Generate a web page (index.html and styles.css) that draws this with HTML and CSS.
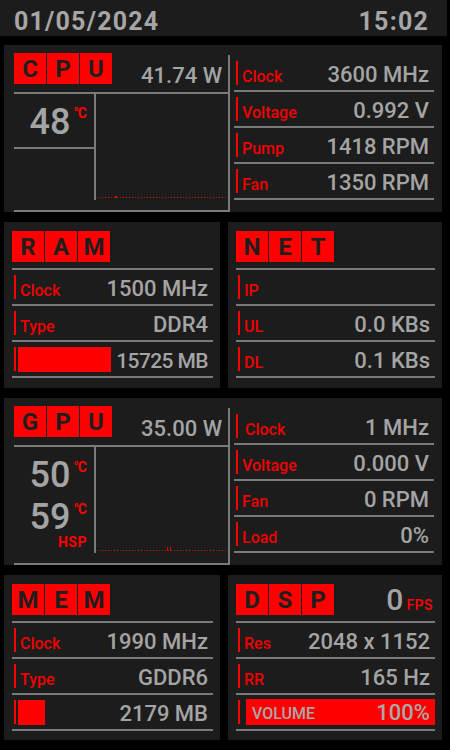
FILE: index.html
```html
<!DOCTYPE html>
<html>
<head>
<meta charset="utf-8">
<link rel="stylesheet" href="styles.css">
</head>
<body>
<div class="header"><span>01/05/2024</span><span>15:02</span></div>
<div class="grid">
  <section class="panel wide">
    <div class="bl">
      <div class="head">
        <div class="title"><span>C</span><span>P</span><span>U</span></div>
        <div class="power">41.74 W</div>
      </div>
      <div class="body">
        <div class="temps">
          <div class="tcell split"><span class="tnum">48</span><span class="deg">°C</span></div>
        </div>
        <div class="graph"><div class="dots"><i class="bump b1"></i></div></div>
      </div>
    </div>
    <div class="br">
      <div class="row"><span class="lab">Clock</span><span class="val">3600 MHz</span></div>
      <div class="row"><span class="lab">Voltage</span><span class="val">0.992 V</span></div>
      <div class="row"><span class="lab">Pump</span><span class="val">1418 RPM</span></div>
      <div class="row"><span class="lab">Fan</span><span class="val">1350 RPM</span></div>
    </div>
  </section>

  <section class="panel sp">
    <div class="head2"><div class="title"><span>R</span><span>A</span><span>M</span></div></div>
    <div class="row"><span class="lab">Clock</span><span class="val">1500 MHz</span></div>
    <div class="row"><span class="lab">Type</span><span class="val">DDR4</span></div>
    <div class="row"><span class="lab"><span class="fill ram"></span></span><span class="val tight">15725 MB</span></div>
  </section>

  <section class="panel sp">
    <div class="head2"><div class="title"><span>N</span><span>E</span><span>T</span></div></div>
    <div class="row"><span class="lab">IP</span><span class="val"></span></div>
    <div class="row"><span class="lab">UL</span><span class="val">0.0 KBs</span></div>
    <div class="row"><span class="lab">DL</span><span class="val">0.1 KBs</span></div>
  </section>

  <section class="panel wide">
    <div class="bl">
      <div class="head">
        <div class="title"><span>G</span><span>P</span><span>U</span></div>
        <div class="power">35.00 W</div>
      </div>
      <div class="body">
        <div class="temps gpu">
          <div class="tcell first"><span class="tnum">50</span><span class="deg">°C</span></div>
          <div class="tcell second"><span class="tnum">59</span><span class="deg">°C</span></div>
          <div class="hsp">HSP</div>
        </div>
        <div class="graph"><div class="dots"><i class="bump b2"></i><i class="bump b3"></i></div></div>
      </div>
    </div>
    <div class="br">
      <div class="row"><span class="lab indent">Clock</span><span class="val">1 MHz</span></div>
      <div class="row"><span class="lab">Voltage</span><span class="val">0.000 V</span></div>
      <div class="row"><span class="lab">Fan</span><span class="val">0 RPM</span></div>
      <div class="row"><span class="lab">Load</span><span class="val">0%</span></div>
    </div>
  </section>

  <section class="panel sp">
    <div class="head2"><div class="title"><span>M</span><span>E</span><span>M</span></div></div>
    <div class="row"><span class="lab">Clock</span><span class="val">1990 MHz</span></div>
    <div class="row"><span class="lab">Type</span><span class="val">GDDR6</span></div>
    <div class="row"><span class="lab"><span class="fill mem"></span></span><span class="val">2179 MB</span></div>
  </section>

  <section class="panel sp">
    <div class="head2">
      <div class="title"><span>D</span><span>S</span><span>P</span></div>
      <div class="fps"><span class="fnum">0</span><span class="funit">FPS</span></div>
    </div>
    <div class="row"><span class="lab">Res</span><span class="val">2048 x 1152</span></div>
    <div class="row"><span class="lab">RR</span><span class="val">165 Hz</span></div>
    <div class="row volrow"><span class="lab"></span><div class="vol"><span class="vtxt">VOLUME</span><span class="vnum">100%</span></div></div>
  </section>
</div>
</body>
</html>
```

FILE: styles.css
```css
html, body {
  margin: 0;
  padding: 0;
  background: #000;
}
body {
  width: 450px;
  height: 750px;
  overflow: hidden;
  font-family: Roboto, "Liberation Sans", sans-serif;
  color: #a4a4a4;
}
.header {
  width: 447px;
  height: 36px;
  box-sizing: border-box;
  background: #1c1c1c;
  display: flex;
  justify-content: space-between;
  align-items: flex-end;
  padding: 0 18px 2px 14px;
  font-size: 25px;
  line-height: 25px;
  font-weight: 700;
  letter-spacing: 1.2px;
  color: #a6a6a6;
}
.grid {
  display: grid;
  grid-template-columns: 216px 214px;
  grid-template-rows: 167px 166px 167px 165px;
  column-gap: 8px;
  row-gap: 10px;
  padding: 9px 0 0 4px;
}
.panel {
  background: #1c1c1c;
  box-sizing: border-box;
}
.wide {
  grid-column: 1 / span 2;
  display: flex;
  padding: 8px 0 0 10px;
}
.title {
  display: flex;
  gap: 1px;
}
.title span {
  width: 32px;
  height: 31px;
  background: #ff0000;
  color: #1e1e1e;
  font-size: 24px;
  font-weight: 700;
  display: flex;
  align-items: center;
  justify-content: center;
}
.bl {
  width: 214px;
  border-bottom: 2px solid #7a7a7a;
}
.head {
  height: 39px;
  border-bottom: 2px solid #7a7a7a;
  display: flex;
  justify-content: space-between;
  align-items: flex-start;
  padding-right: 6px;
}
.power {
  align-self: flex-end;
  font-size: 22px;
  line-height: 22px;
  font-weight: 500;
  margin-bottom: 5px;
  white-space: nowrap;
}
.body {
  display: flex;
  height: 106px;
}
.temps {
  width: 80px;
  border-right: 2px solid #7a7a7a;
  display: flex;
  flex-direction: column;
}
.tcell {
  display: flex;
  justify-content: flex-end;
  align-items: flex-start;
  padding: 10px 8px 0 0;
}
.tcell.split {
  height: 43px;
  border-bottom: 2px solid #7a7a7a;
}
.tnum {
  font-size: 36px;
  line-height: 36px;
  font-weight: 500;
}
.deg {
  color: #ff0000;
  font-size: 14px;
  line-height: 14px;
  font-weight: 700;
  margin: 2px 0 0 3px;
  letter-spacing: -1px;
}
.gpu .tnum {
  line-height: 30px;
}
.gpu .deg {
  margin-top: 0;
}
.gpu .tcell.first {
  padding-top: 13px;
}
.gpu .tcell.second {
  padding-top: 12px;
}
.hsp {
  color: #ff0000;
  font-size: 14px;
  line-height: 12px;
  font-weight: 700;
  text-align: right;
  padding-right: 7px;
  margin-top: 4px;
  letter-spacing: 0.5px;
}
.graph {
  flex: 1;
  display: flex;
  align-items: flex-end;
  padding: 0 1px 2px 3px;
}
.dots {
  flex: 1;
  height: 1px;
  position: relative;
  background: repeating-linear-gradient(90deg, #d00000 0 1px, transparent 1px 3px);
}
.bump {
  position: absolute;
  bottom: 0;
  width: 1px;
  background: #e00000;
}
.b1 { left: 16px; height: 2px; width: 2px; }
.b2 { left: 68px; height: 4px; }
.b3 { left: 71px; height: 4px; }
.br {
  flex: 1;
  margin-top: 2px;
  padding: 1px 8px 0 4px;
  border-left: 2px solid #7a7a7a;
}
.row {
  height: 34px;
  border-bottom: 2px solid #7a7a7a;
  display: flex;
  padding: 0 5px 0 2px;
}
.lab {
  margin: 5px 0;
  border-left: 2px solid #ff0000;
  padding-left: 4px;
  display: flex;
  align-items: flex-end;
  font-size: 16px;
  line-height: 16px;
  font-weight: 500;
  color: #f00000;
  flex-shrink: 0;
}
.lab.indent {
  padding-left: 7px;
}
.val {
  margin-left: auto;
  align-self: flex-end;
  font-size: 22px;
  line-height: 22px;
  font-weight: 500;
  margin-bottom: 4px;
  color: #a4a4a4;
  white-space: nowrap;
}
.val.tight {
  letter-spacing: -0.6px;
  font-size: 21px;
}
.sp {
  padding: 9px 7px 0 8px;
}
.head2 {
  height: 37px;
  border-bottom: 2px solid #7a7a7a;
  display: flex;
  justify-content: space-between;
  align-items: flex-start;
}
.fill {
  display: block;
  height: 25px;
  background: #ff0000;
  margin: 0 0 -1px -2px;
}
.fill.ram { width: 93px; }
.fill.mem { width: 27px; }
.fps {
  align-self: flex-end;
  display: flex;
  align-items: baseline;
  margin-bottom: 6px;
  padding-right: 2px;
}
.fnum {
  font-size: 30px;
  line-height: 30px;
  font-weight: 500;
}
.funit {
  font-size: 14px;
  color: #ff0000;
  font-weight: 500;
  margin-left: 3px;
  letter-spacing: 0.5px;
}
.volrow {
  padding-right: 0;
}
.vol {
  flex: 1;
  margin: 4px 0 4px 2px;
  background: #ff0000;
  display: flex;
  justify-content: space-between;
  align-items: flex-end;
  padding: 0 5px 0 6px;
}
.vtxt {
  font-size: 16px;
  line-height: 16px;
  margin-bottom: 3px;
  font-weight: 500;
  color: #a8a8a8;
}
.vnum {
  font-size: 22px;
  line-height: 22px;
  font-weight: 500;
  margin-bottom: 1px;
  color: #a8a8a8;
}
```
